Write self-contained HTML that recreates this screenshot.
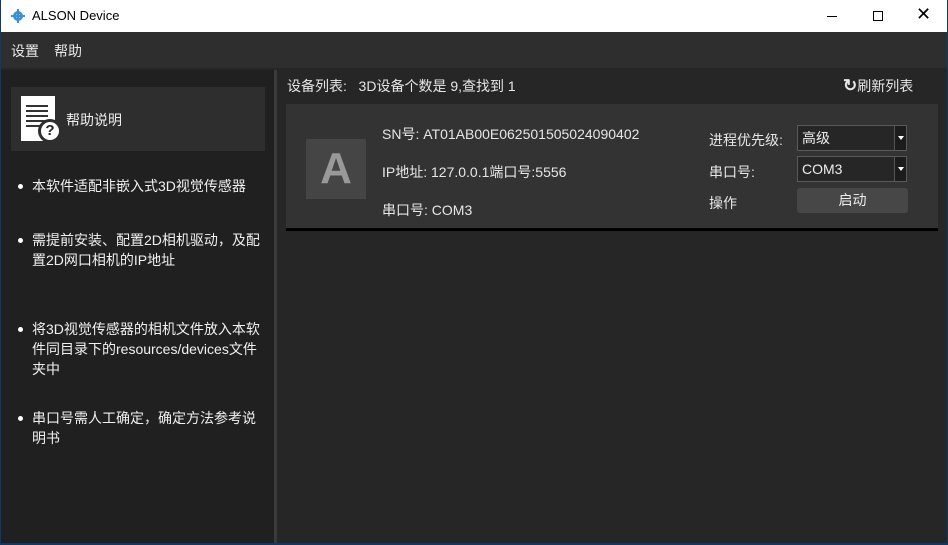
<!DOCTYPE html>
<html><head><meta charset="utf-8"><style>
*{margin:0;padding:0;box-sizing:border-box}
body{width:948px;height:545px;overflow:hidden;background:#0d3a66;font-family:"Liberation Sans","Noto Sans CJK SC",sans-serif;position:relative}
.win{position:absolute;left:1px;top:0;width:946px;height:543px;background:#262626}
.title{position:absolute;left:0;top:0;width:946px;height:32px;background:#fff;color:#000;font-size:13px}
.menu{position:absolute;left:0;top:32px;width:946px;height:36px;background:#2e2e2e;color:#e8e8e8;font-size:14px}
.left{position:absolute;left:0;top:70px;width:273px;height:473px;background:#202020}
.sep{position:absolute;left:273px;top:70px;width:3px;height:473px;background:#3a3a3a}
.t{position:absolute;white-space:nowrap;color:#e6e6e6;font-size:14px}
.li{position:absolute;left:31px;width:235px;color:#f0f0f0;font-size:14px;line-height:20px}
.li:before{content:"";position:absolute;left:-14px;top:8px;width:5px;height:5px;border-radius:50%;background:#fff}
.sel{position:absolute;left:796px;width:110px;height:26px;border:1px solid #5a5a5a;background:#262626;color:#eee;font-size:14px;line-height:24px;padding-left:4px}
.sel i{position:absolute;right:0;top:0;width:12px;height:24px;background:#1c1c1c;border-left:1px solid #555}
.sel i:after{content:"";position:absolute;left:3px;top:10px;border:3px solid transparent;border-top:4px solid #fff}
</style></head><body>
<div class="win">
<div class="title">
<svg style="position:absolute;left:10px;top:9px" width="14" height="14" viewBox="0 0 14 14"><circle cx="7" cy="7" r="5" fill="#3a8fd6"/><circle cx="7" cy="7" r="2" fill="#fff"/><rect x="6" y="0" width="2" height="14" fill="#3a8fd6"/><rect x="0" y="6" width="14" height="2" fill="#3a8fd6"/></svg>
<span style="position:absolute;left:31px;top:8px">ALSON Device</span>
<div style="position:absolute;left:826px;top:16px;width:10px;height:1px;background:#000"></div>
<div style="position:absolute;left:872px;top:11px;width:10px;height:10px;border:1px solid #000"></div>
<span style="position:absolute;left:915px;top:4px;font-size:18px">✕</span>
</div>
<div class="menu"><span style="position:absolute;left:10px;top:9px">设置</span><span style="position:absolute;left:53px;top:9px">帮助</span></div>
<div class="left">
<div style="position:absolute;left:10px;top:17px;width:254px;height:64px;background:#2e2e2e">
<div style="position:absolute;left:10px;top:9px;width:34px;height:45px;background:#fff"></div>
<div style="position:absolute;left:15px;top:18px;width:22px;height:2px;background:#333;box-shadow:0 5px #333,0 10px #333,0 15px #333,0 20px #333"></div>
<div style="position:absolute;left:27px;top:32px;width:24px;height:24px;border-radius:50%;background:#fff;border:3px solid #2e2e2e;color:#222;font-weight:bold;font-size:15px;text-align:center;line-height:18px">?</div>
<span style="position:absolute;left:55px;top:23px;color:#eee;font-size:14px">帮助说明</span>
</div>
<div class="li" style="top:106px">本软件适配非嵌入式3D视觉传感器</div>
<div class="li" style="top:160px">需提前安装、配置2D相机驱动，及配置2D网口相机的IP地址</div>
<div class="li" style="top:249px">将3D视觉传感器的相机文件放入本软件同目录下的resources/devices文件夹中</div>
<div class="li" style="top:338px">串口号需人工确定，确定方法参考说明书</div>
</div>
<div class="sep"></div>
<span class="t" style="left:286px;top:76px">设备列表:&nbsp;&nbsp;&nbsp;3D设备个数是 9,查找到 1</span>
<span class="t" style="left:842px;top:76px;font-size:14px"><b style="font-size:17px">↻</b>刷新列表</span>
<div style="position:absolute;left:285px;top:104px;width:652px;height:124px;background:#333"></div>
<div style="position:absolute;left:285px;top:228px;width:652px;height:3px;background:#000"></div>
<div style="position:absolute;left:305px;top:139px;width:60px;height:60px;background:#454545;color:#999;font-size:44px;font-weight:bold;text-align:center;line-height:60px">A</div>
<span class="t" style="left:381px;top:124px">SN号:&nbsp;AT01AB00E062501505024090402</span>
<span class="t" style="left:381px;top:162px">IP地址:&nbsp;127.0.0.1端口号:5556</span>
<span class="t" style="left:381px;top:200px">串口号:&nbsp;COM3</span>
<span class="t" style="left:708px;top:130px">进程优先级:</span>
<span class="t" style="left:708px;top:162px">串口号:</span>
<span class="t" style="left:708px;top:193px">操作</span>
<div class="sel" style="top:125px">高级<i></i></div>
<div class="sel" style="top:156px">COM3<i></i></div>
<div style="position:absolute;left:796px;top:188px;width:111px;height:25px;background:#474747;border-radius:3px;color:#eee;font-size:14px;text-align:center;line-height:25px">启动</div>
</div>
</body></html>
